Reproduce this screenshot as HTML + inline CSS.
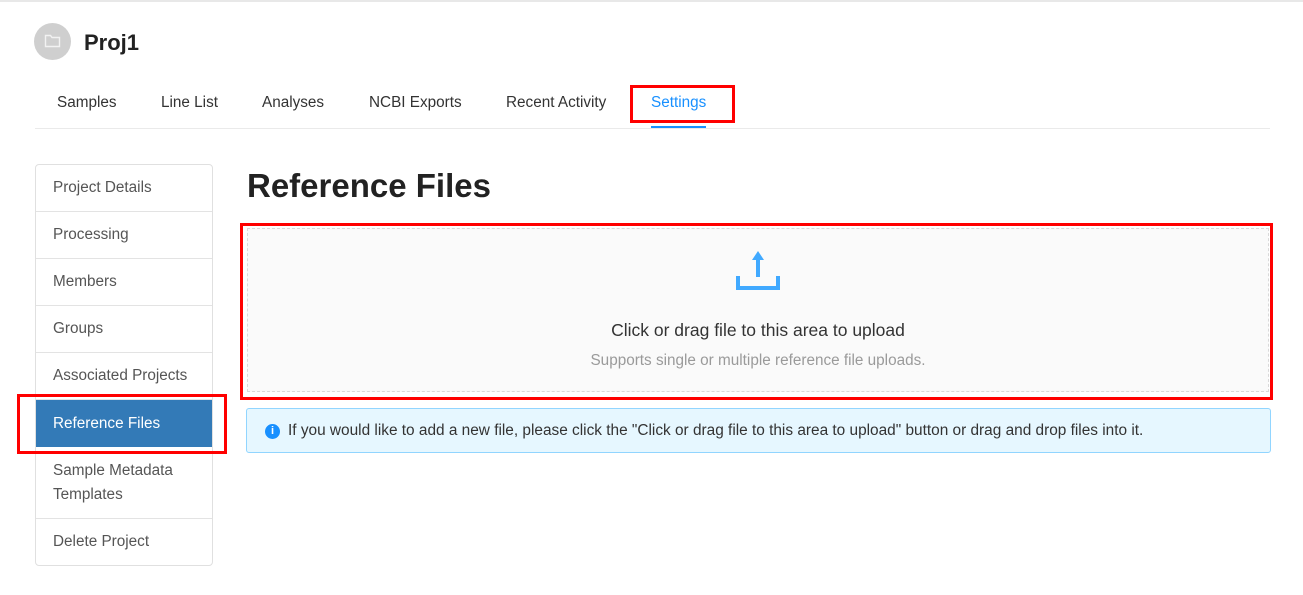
<!DOCTYPE html>
<html><head><meta charset="utf-8"><style>
*{box-sizing:border-box;margin:0;padding:0}
body{width:1303px;height:595px;background:#fff;font-family:"Liberation Sans",sans-serif;position:relative;overflow:hidden;color:rgba(0,0,0,.85)}
.a{position:absolute;white-space:nowrap}
.tab{position:absolute;top:94px;font-size:15.3px;color:#333}
.mi{position:absolute;left:36px;width:176px;border-bottom:1px solid #e3e3e3;font-size:15.3px;color:#555;padding-left:17px}
.red{position:absolute;border:3px solid #f00}
</style></head><body>
<div class="a" style="left:0;top:0;width:1303px;height:2px;background:#e8e8e8"></div>
<div class="a" style="left:34px;top:23px;width:37px;height:37px;border-radius:50%;background:#cfcfcf"></div>
<svg class="a" style="left:44px;top:33px" width="17" height="15" viewBox="0 0 17 15"><path d="M1.5 2.5h5l1.5 2h7.5v9h-14z" fill="none" stroke="#f2f2f2" stroke-width="1.4"/></svg>
<div class="a" style="left:84px;top:30px;font-size:22px;font-weight:bold;color:#222">Proj1</div>

<div class="tab" style="left:57px">Samples</div>
<div class="tab" style="left:161px">Line List</div>
<div class="tab" style="left:262px">Analyses</div>
<div class="tab" style="left:369px">NCBI Exports</div>
<div class="tab" style="left:506px">Recent Activity</div>
<div class="tab" style="left:651px;color:#1890ff">Settings</div>
<div class="a" style="left:35px;top:128px;width:1235px;height:1px;background:#eaeaea"></div>
<div class="a" style="left:651px;top:126px;width:55px;height:2px;background:#1890ff"></div>
<div class="red" style="left:630px;top:85px;width:105px;height:38px"></div>

<div class="a" style="left:35px;top:164px;width:178px;height:402px;border:1px solid #e0e0e0;border-radius:4px"></div>
<div class="mi" style="top:165px;height:47px;line-height:46px">Project Details</div>
<div class="mi" style="top:212px;height:47px;line-height:46px">Processing</div>
<div class="mi" style="top:259px;height:47px;line-height:46px">Members</div>
<div class="mi" style="top:306px;height:47px;line-height:46px">Groups</div>
<div class="mi" style="top:353px;height:47px;line-height:46px">Associated Projects</div>
<div class="mi" style="top:400px;height:47px;line-height:47px;background:#337ab7;color:#fff;border:none">Reference Files</div>
<div class="mi" style="top:447px;height:72px;line-height:24px;padding-top:12px;white-space:normal">Sample Metadata<br>Templates</div>
<div class="mi" style="top:519px;height:46px;line-height:45px;border:none">Delete Project</div>
<div class="red" style="left:17px;top:394px;width:210px;height:60px"></div>

<div class="a" style="left:247px;top:167px;font-size:33px;font-weight:bold;color:#222">Reference Files</div>
<div class="a" style="left:247px;top:228px;width:1022px;height:164px;background:#fafafa;border:1px dashed #d9d9d9"></div>
<svg class="a" style="left:735px;top:248px" width="46" height="44" viewBox="0 0 46 44"><path d="M23 8v21" stroke="#40a9ff" stroke-width="4"/><path d="M17 12l6-9 6 9z" fill="#40a9ff"/><path d="M3 28v12h40v-12" fill="none" stroke="#40a9ff" stroke-width="4"/></svg>
<div class="a" style="left:247px;width:1022px;top:320px;text-align:center;font-size:17.5px;color:#333">Click or drag file to this area to upload</div>
<div class="a" style="left:247px;width:1022px;top:352px;text-align:center;font-size:15.3px;color:#9a9a9a">Supports single or multiple reference file uploads.</div>
<div class="red" style="left:240px;top:223px;width:1033px;height:177px"></div>

<div class="a" style="left:246px;top:408px;width:1025px;height:45px;background:#e6f7ff;border:1px solid #91d5ff;border-radius:3px"></div>
<div class="a" style="left:265px;top:424px;width:15px;height:15px;border-radius:50%;background:#1890ff;color:#fff;font-size:11px;font-weight:bold;text-align:center;line-height:15px">i</div>
<div class="a" style="left:288px;top:422px;font-size:15.4px;color:#333">If you would like to add a new file, please click the "Click or drag file to this area to upload" button or drag and drop files into it.</div>
</body></html>
